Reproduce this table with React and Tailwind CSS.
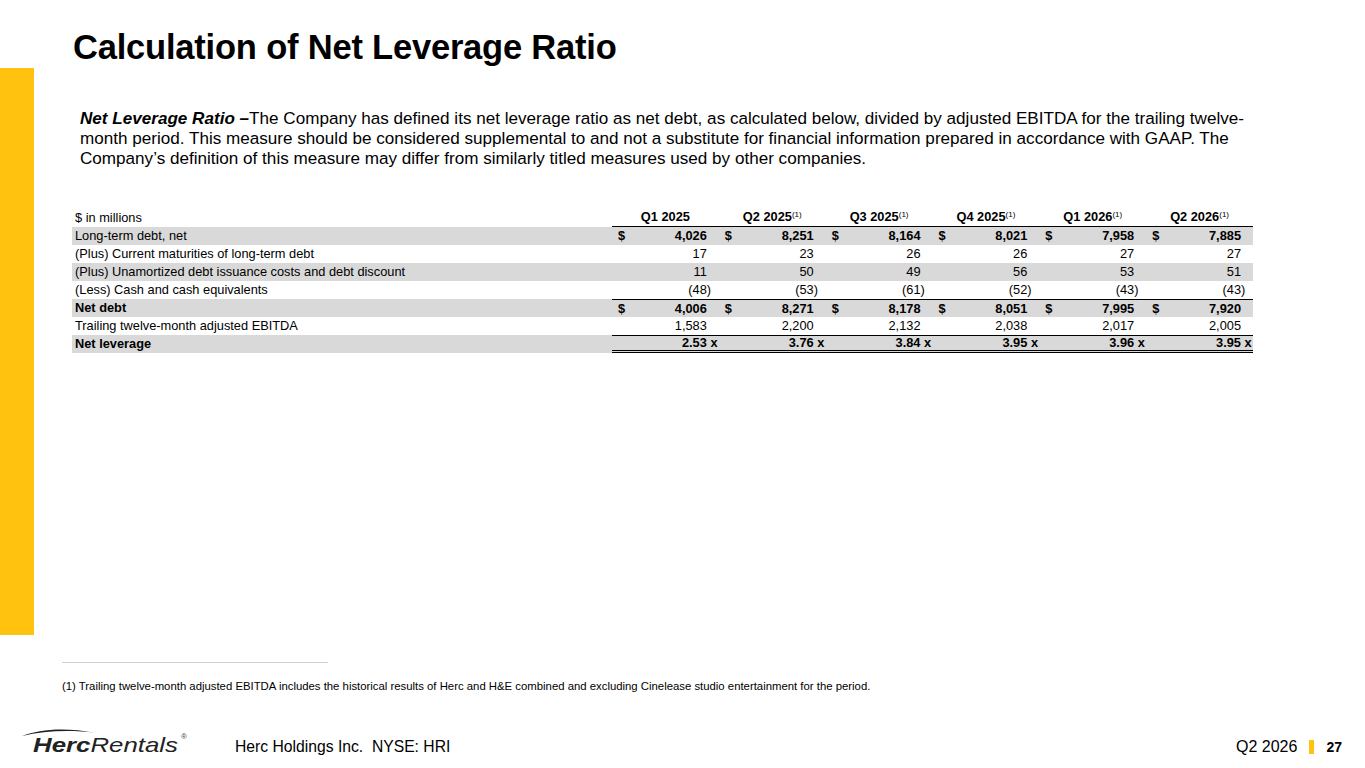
const cols = [
  { q: "Q1 2025", sup: false },
  { q: "Q2 2025", sup: true },
  { q: "Q3 2025", sup: true },
  { q: "Q4 2025", sup: true },
  { q: "Q1 2026", sup: true },
  { q: "Q2 2026", sup: true },
];

const rows = [
  { label: "Long-term debt, net", gray: true, boldVals: true, dollar: true, vals: ["4,026", "8,251", "8,164", "8,021", "7,958", "7,885"] },
  { label: "(Plus) Current maturities of long-term debt", vals: ["17", "23", "26", "26", "27", "27"] },
  { label: "(Plus) Unamortized debt issuance costs and debt discount", gray: true, vals: ["11", "50", "49", "56", "53", "51"] },
  { label: "(Less) Cash and cash equivalents", neg: true, vals: ["48", "53", "61", "52", "43", "43"] },
  { label: "Net debt", gray: true, bold: true, dollar: true, topLine: true, vals: ["4,006", "8,271", "8,178", "8,051", "7,995", "7,920"] },
  { label: "Trailing twelve-month adjusted EBITDA", vals: ["1,583", "2,200", "2,132", "2,038", "2,017", "2,005"] },
  { label: "Net leverage", gray: true, bold: true, topLine: true, times: true, last: true, vals: ["2.53", "3.76", "3.84", "3.95", "3.96", "3.95"] },
];

function Cell({ row, v }) {
  const border = row.topLine ? "border-t border-black" : "";
  const bottom = row.last ? "border-b-[3px] border-double border-black" : "";
  return (
    <div className={`flex items-center h-[18px] ${border} ${bottom} ${row.boldVals ? "font-bold" : ""}`}>
      <span className="pl-[6px] w-[20px]">{row.dollar ? "$" : ""}</span>
      <span className="flex-1 text-right">{row.neg ? `(${v}` : v}</span>
      <span className="w-[12px] whitespace-pre">{row.neg ? ")" : row.times ? " x" : ""}</span>
    </div>
  );
}

function Logo() {
  return (
    <div className="relative w-[175px] h-[36px]">
      <svg className="absolute left-0 top-0" width="90" height="12" viewBox="0 0 90 12">
        <path d="M2 10 C 20 3, 45 1, 76 7 C 50 3.5, 24 5, 2 10 Z" fill="#222" />
      </svg>
      <div className="absolute left-[13px] top-[8px] text-[21px] leading-none italic text-[#222] origin-left scale-x-[1.23] whitespace-nowrap">
        <span className="font-bold">Herc</span>
        <span className="font-light">Rentals</span>
      </div>
      <span className="absolute left-[161px] top-[7px] text-[8px] text-[#444] leading-none">®</span>
    </div>
  );
}

export default function App() {
  return (
    <div className="relative w-[1365px] h-[768px] bg-white overflow-hidden text-black" style={{ fontFamily: '"Liberation Sans", Arial, sans-serif' }}>
      <div className="absolute left-0 top-[68px] w-[34px] h-[567px] bg-[#FFC20E]" />

      <div className="pl-[73px] pt-[27px]">
        <h1 className="text-[34.5px] font-bold leading-[40px] tracking-[-0.2px]">Calculation of Net Leverage Ratio</h1>

        <p className="mt-[42px] ml-[7px] w-[1180px] text-[17.1px] leading-[20px]">
          <span className="font-bold italic">Net Leverage Ratio –</span>The Company has defined its net leverage ratio as net debt, as calculated below, divided by adjusted EBITDA for the trailing twelve-month period. This measure should be considered supplemental to and not a substitute for financial information prepared in accordance with GAAP. The Company’s definition of this measure may differ from similarly titled measures used by other companies.
        </p>

        <div className="mt-[39px] ml-[-1px] w-[1181px] text-[12.8px] leading-[18px]">
          <div className="grid grid-cols-[540px_repeat(6,1fr)]">
            <div className="h-[19px] pl-[3px] flex items-center">$ in millions</div>
            {cols.map((c) => (
              <div key={c.q} className="h-[19px] flex items-center justify-center font-bold border-b border-black">
                <span>
                  {c.q}
                  {c.sup && <sup className="text-[8px] font-normal -top-[4px]">(1)</sup>}
                </span>
              </div>
            ))}
          </div>
          {rows.map((row) => (
            <div key={row.label} className={`grid grid-cols-[540px_repeat(6,1fr)] ${row.gray ? "bg-[#D9D9D9]" : ""} ${row.bold ? "font-bold" : ""}`}>
              <div className="h-[18px] pl-[3px] flex items-center">{row.label}</div>
              {row.vals.map((v, i) => (
                <Cell key={i} row={row} v={v} />
              ))}
            </div>
          ))}
        </div>
      </div>

      <div className="absolute left-[62px] top-[662px] w-[266px] border-t border-[#D0D0D0]" />
      <div className="absolute left-[62px] top-[679px] text-[11.35px] leading-[14px] whitespace-nowrap">
        (1) Trailing twelve-month adjusted EBITDA includes the historical results of Herc and H&amp;E combined and excluding Cinelease studio entertainment for the period.
      </div>

      <div className="absolute left-[20px] top-[726px]">
        <Logo />
      </div>
      <div className="absolute left-[235px] top-[738px] text-[15.7px] leading-[18px] whitespace-pre">Herc Holdings Inc.  NYSE: HRI</div>
      <div className="absolute right-[23px] top-[738px] flex items-center gap-[12px]">
        <span className="text-[16px] leading-[18px]">Q2 2026</span>
        <span className="w-[5px] h-[14px] bg-[#FFC20E]" />
        <span className="text-[14px] font-bold leading-[18px]">27</span>
      </div>
    </div>
  );
}
